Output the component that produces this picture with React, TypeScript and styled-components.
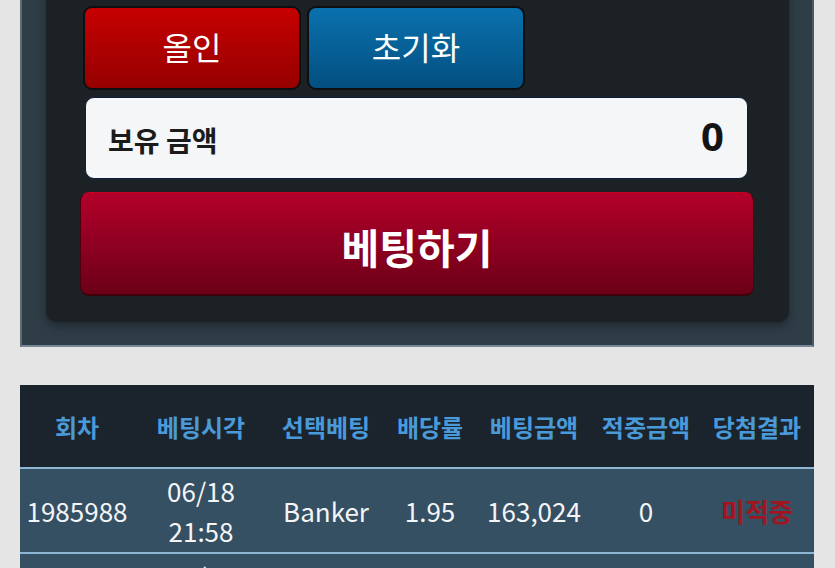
import styled, { createGlobalStyle } from "styled-components";

const GlobalStyle = createGlobalStyle`
  body {
    margin: 0;
    background: #e5e5e5;
    font-family: "Noto Sans CJK KR", "Noto Sans", sans-serif;
  }
`;

const Page = styled.div`
  display: flex;
  flex-direction: column;
  gap: 38px;
  padding: 0 21px 40px 20px;
  margin-top: -40px;
`;

const OuterPanel = styled.div`
  background: #2f3d47;
  border-left: 2px solid #5a6b78;
  border-right: 2px solid #4a5966;
  border-bottom: 2px solid #76889a;
  padding: 0 23px 23px 24px;
`;

const InnerPanel = styled.div`
  background: #1c2125;
  border-radius: 10px;
  box-shadow: 0 4px 8px rgba(0, 0, 0, 0.35);
  padding: 46px 34px 26px 34px;
  display: flex;
  flex-direction: column;
`;

const ButtonRow = styled.div`
  display: flex;
  gap: 6px;
  margin: 0 3px;
`;

const SmallButton = styled.button<{ $tone: "red" | "blue" }>`
  width: 218px;
  height: 84px;
  border: 2px solid #0d0f11;
  border-radius: 9px;
  color: #ffffff;
  font-family: "Noto Sans CJK KR", sans-serif;
  font-size: 32px;
  font-weight: 400;
  background: ${(p) =>
    p.$tone === "red"
      ? "linear-gradient(#c60000, #960000)"
      : "linear-gradient(#0a71ad, #034f80)"};
  padding: 0 0 4px;
`;

const AmountBox = styled.div`
  margin: 7px 7px 0 5px;
  height: 80px;
  background: #f5f6f8;
  border: 1px solid #0e1c3c;
  border-radius: 9px;
  display: flex;
  align-items: center;
  justify-content: space-between;
  padding: 0 23px 0 22px;
`;

const AmountLabel = styled.span`
  font-size: 28px;
  font-weight: 700;
  color: #1b1b1b;
  margin-top: 4px;
`;

const AmountValue = styled.span`
  font-family: "Noto Sans", sans-serif;
  font-size: 40px;
  font-weight: 700;
  color: #141414;
  margin-bottom: 6px;
`;

const BetButton = styled.button`
  margin: 13px 1px 0 0;
  height: 104px;
  border: 1px solid #4c0010;
  border-top-color: #c8001f;
  border-bottom: 2px solid #3e000c;
  border-radius: 9px;
  background: linear-gradient(#b3002a, #6b0017);
  color: #ffffff;
  font-family: "Noto Sans CJK KR", sans-serif;
  font-size: 41px;
  font-weight: 700;
  padding: 4px 0 0;
`;

const Table = styled.table`
  width: 794px;
  border-collapse: collapse;
  table-layout: fixed;
`;

const HeadCell = styled.th<{ $w: number }>`
  width: ${(p) => p.$w}px;
  height: 82px;
  background: #1b242c;
  color: #4a9ad9;
  font-size: 24px;
  font-weight: 700;
  text-align: center;
  padding: 0;
  border-bottom: 2px solid #8cb6d4;
  white-space: nowrap;
`;

const Row = styled.tr`
  background: #365063;
  border-bottom: 2px solid #8cb6d4;
`;

const Cell = styled.td<{ $result?: boolean }>`
  height: 83px;
  padding: 0;
  text-align: center;
  color: ${(p) => (p.$result ? "#a0151f" : "#f3f5f7")};
  font-size: 26px;
  font-weight: ${(p) => (p.$result ? 700 : 400)};
  line-height: 40px;
`;

const columns = [
  { title: "회차", w: 114 },
  { title: "베팅시각", w: 134 },
  { title: "선택베팅", w: 116 },
  { title: "배당률", w: 92 },
  { title: "베팅금액", w: 116 },
  { title: "적중금액", w: 108 },
  { title: "당첨결과", w: 114 },
];

const rows = [
  { round: "1985988", date: "06/18", time: "21:58", pick: "Banker", odds: "1.95", amount: "163,024", win: "0", result: "미적중" },
  { round: "1985987", date: "06/18", time: "21:57", pick: "Player", odds: "2.00", amount: "150,000", win: "0", result: "미적중" },
];

export default function App() {
  return (
    <>
      <GlobalStyle />
      <Page>
        <OuterPanel>
          <InnerPanel>
            <ButtonRow>
              <SmallButton $tone="red">올인</SmallButton>
              <SmallButton $tone="blue">초기화</SmallButton>
            </ButtonRow>
            <AmountBox>
              <AmountLabel>보유 금액</AmountLabel>
              <AmountValue>0</AmountValue>
            </AmountBox>
            <BetButton>베팅하기</BetButton>
          </InnerPanel>
        </OuterPanel>
        <Table>
          <thead>
            <tr>
              {columns.map((c) => (
                <HeadCell key={c.title} $w={c.w}>
                  {c.title}
                </HeadCell>
              ))}
            </tr>
          </thead>
          <tbody>
            {rows.map((r) => (
              <Row key={r.round}>
                <Cell>{r.round}</Cell>
                <Cell>
                  {r.date}
                  <br />
                  {r.time}
                </Cell>
                <Cell>{r.pick}</Cell>
                <Cell>{r.odds}</Cell>
                <Cell>{r.amount}</Cell>
                <Cell>{r.win}</Cell>
                <Cell $result>{r.result}</Cell>
              </Row>
            ))}
          </tbody>
        </Table>
      </Page>
    </>
  );
}
